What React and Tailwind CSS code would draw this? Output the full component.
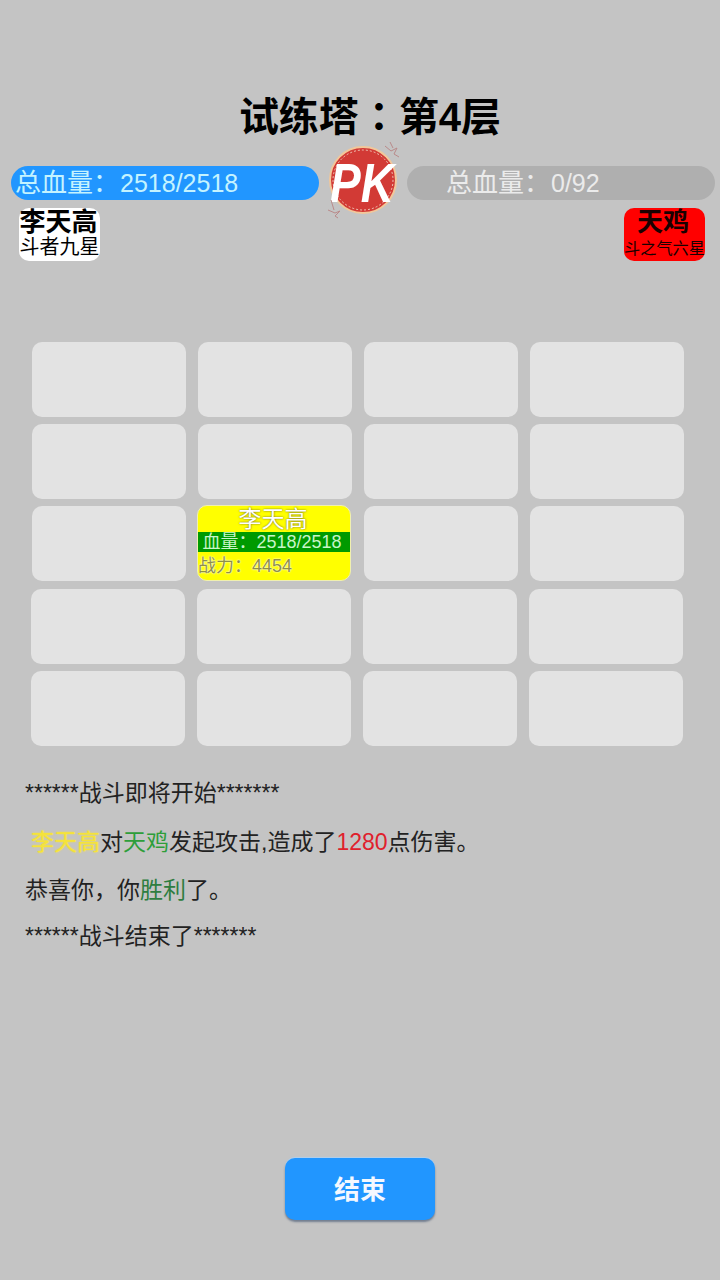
const rows = [0, 1, 2, 3, 4];
const cols = [0, 1, 2, 3];

function Hero() {
  return (
    <div className="-mt-[1px] -ml-[1px] mr-[1px] flex h-[76px] w-[154px] flex-col rounded-[10px] border border-[#f0f0b0] bg-[#ffff00]">
      <div className="h-[26px] pr-[2px] text-center text-[23px] leading-[26px] text-white [text-shadow:0_0_2px_#55552a]">李天高</div>
      <div className="flex h-[20px] items-center justify-center bg-[#009a00] pr-[4px] text-[18px] leading-[20px] text-[#c8f5c8]">
        <span>血量：</span>
        <span>2518/2518</span>
      </div>
      <div className="h-[28px] text-[18px] leading-[28px] text-[#8f8f45] [text-shadow:0_0_2px_#ffffff,0_0_1px_#ffffff]">战力：4454</div>
    </div>
  );
}

function Logo() {
  return (
    <svg viewBox="0 0 90 90" className="-mx-[10px] -my-[28px] h-[90px] w-[90px] shrink-0">
      <circle cx="45" cy="42" r="33" fill="#d23a35" stroke="#f2c79a" strokeWidth="2" />
      <circle cx="45" cy="42" r="30" fill="none" stroke="#f5e2d0" strokeWidth="0.8" strokeDasharray="2 2" />
      <text transform="translate(44 64) scale(1 1.22)" textAnchor="middle" fontFamily="Liberation Sans, sans-serif" fontStyle="italic" fontWeight="700" fontSize="46" fill="#ffffff">PK</text>
      <path d="M67 8l6 5 6-3-3 6 5 3M72 4l3 6" fill="none" stroke="#b98a8a" strokeWidth="1" />
      <path d="M10 72l7 3 5-2-5 5 3 2M13 62l3 10" fill="none" stroke="#b98a8a" strokeWidth="1" />
    </svg>
  );
}

export default function App() {
  return (
    <div className="flex h-[1280px] w-[720px] flex-col overflow-hidden bg-[#c4c4c4] font-['Liberation_Sans','Noto_Sans_CJK_SC',sans-serif] text-black">
      <h1 className="mt-[90px] h-[48px] pl-[20px] text-center text-[40px] font-bold leading-[48px]">
        试练塔<span className="font-['Noto_Sans_CJK_TC',sans-serif]">：</span>第4层
      </h1>

      <div className="mt-[28px] flex h-[34px] items-center pl-[11px] pr-[5px]">
        <div className="flex h-[34px] w-[308px] items-center rounded-[17px] bg-[#2196ff] pl-[4px] text-[26px] leading-[34px] text-[#c4f3ff]">
          <span>总血量：</span>
          <span className="pl-[1px] text-[25px]">2518/2518</span>
        </div>
        <div className="flex w-[88px] justify-center">
          <Logo />
        </div>
        <div className="flex h-[34px] w-[308px] items-center rounded-[17px] bg-[#afafaf] pl-[39px] text-[26px] leading-[34px] text-[#ebebeb]">
          <span>总血量：</span>
          <span className="pl-[1px] text-[25px]">0/92</span>
        </div>
      </div>

      <div className="mt-[8px] flex justify-between pl-[19px] pr-[15px]">
        <div className="flex h-[53px] w-[81px] flex-col items-center rounded-[10px] bg-white">
          <div className="h-[29px] pr-[2px] text-[26px] font-bold leading-[29px]">李天高</div>
          <div className="h-[24px] whitespace-nowrap text-[20px] leading-[20px]">斗者九星</div>
        </div>
        <div className="flex h-[53px] w-[81px] flex-col items-center rounded-[10px] bg-[#ff0000] text-[#1a0000]">
          <div className="h-[29px] pr-[3px] text-[26px] font-bold leading-[29px]">天鸡</div>
          <div className="h-[24px] whitespace-nowrap text-[16.2px] leading-[22px]">斗之气六星</div>
        </div>
      </div>

      <div className="mt-[81px] flex flex-col gap-[7.2px]">
        {rows.map((r) => (
          <div key={r} className={r < 3 ? "ml-[32px] flex gap-[12px]" : "ml-[31px] flex gap-[12px]"}>
            {cols.map((c) =>
              r === 2 && c === 1 ? (
                <Hero key={c} />
              ) : (
                <div key={c} className="h-[75px] w-[154px] rounded-[10px] bg-[#e3e3e3]" />
              )
            )}
          </div>
        ))}
      </div>

      <div className="mt-[27px] pl-[25px] text-[23px] text-[#222222]">
        <div className="h-[49px] leading-[40px]">******战斗即将开始*******</div>
        <div className="h-[48px] leading-[40px]">
          <span className="pl-[6px] text-[#f5e33a] [text-shadow:0_0_2px_#f5e33a]">李天高</span>
          <span>对</span>
          <span className="text-[#2e9e3a]">天鸡</span>
          <span>发起攻击,造成了</span>
          <span className="text-[#e0202c]">1280</span>
          <span>点伤害。</span>
        </div>
        <div className="h-[46px] leading-[40px]">
          <span>恭喜你，你</span>
          <span className="text-[#2e7d40]">胜利</span>
          <span>了。</span>
        </div>
        <div className="h-[40px] leading-[40px]">******战斗结束了*******</div>
      </div>

      <div className="mt-[202px] flex justify-center">
        <button className="h-[62px] w-[150px] rounded-[10px] bg-[#2196ff] pt-[3px] text-[26px] font-bold text-[#f4f8ff] shadow-[0_2px_2px_rgba(60,80,110,0.6),0_-1px_1px_rgba(170,210,250,0.8)]">
          结束
        </button>
      </div>
    </div>
  );
}
